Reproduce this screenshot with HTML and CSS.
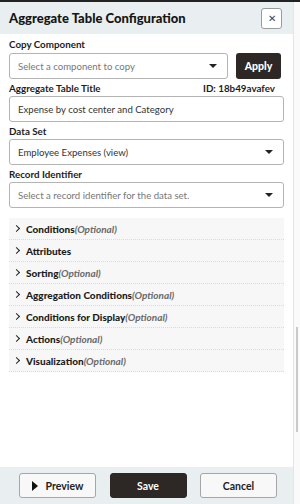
FILE: index.html
```html
<!DOCTYPE html>
<html>
    <head>
        <meta charset="UTF-8">
        <title>Aggregate Table Configuration</title>
        <link rel="stylesheet" href="styles.css">
    </head>
    <body>
        <div class="frame">
            <div class="panel">
                <!--header-->
                <div class="head">
                    <h1>Aggregate Table Configuration</h1>
                    <button class="close">&#x2715;</button>
                </div>
                <!--form-->
                <div class="body">
                    <div class="label">Copy Component</div>
                    <div class="copy-row">
                        <div class="select grow"><span class="ph">Select a component to copy</span><span class="caret"></span></div>
                        <button class="apply">Apply</button>
                    </div>
                    <div class="label split"><span>Aggregate Table Title</span><span>ID: 18b49avafev</span></div>
                    <div class="select">Expense by cost center and Category</div>
                    <div class="label">Data Set</div>
                    <div class="select"><span>Employee Expenses (view)</span><span class="caret"></span></div>
                    <div class="label">Record Identifier</div>
                    <div class="select"><span class="ph">Select a record identifier for the data set.</span><span class="caret"></span></div>

                    <div class="acc">
                        <div class="row"><span class="chev"></span><b>Conditions</b><i>(Optional)</i></div>
                        <div class="row"><span class="chev"></span><b>Attributes</b></div>
                        <div class="row"><span class="chev"></span><b>Sorting</b><i>(Optional)</i></div>
                        <div class="row"><span class="chev"></span><b>Aggregation Conditions</b><i>(Optional)</i></div>
                        <div class="row"><span class="chev"></span><b>Conditions for Display</b><i>(Optional)</i></div>
                        <div class="row"><span class="chev"></span><b>Actions</b><i>(Optional)</i></div>
                        <div class="row"><span class="chev"></span><b>Visualization</b><i>(Optional)</i></div>
                    </div>
                </div>
                <!--footer-->
                <div class="foot">
                    <button class="btn"><span class="play"></span>Preview</button>
                    <button class="btn dark">Save</button>
                    <button class="btn">Cancel</button>
                </div>
            </div>
            <div class="scroll"><div class="thumb"></div></div>
        </div>
    </body>
</html>
```

FILE: styles.css
```css
body{
    margin: 0;
    font-family: 'Lato', sans-serif;
    color: #1d1d1d;
    background-color: white;
}
.frame{
    display: flex;
    height: 504px;
    border-top: 2px solid #222;
    box-sizing: border-box;
}
.panel{
    width: 293px;
    display: flex;
    flex-direction: column;
    border-right: 1px solid #e2e6e6;
}
.head{
    background-color: #e9eff0;
    height: 32px;
    display: flex;
    align-items: center;
    justify-content: space-between;
    padding: 0 8px 0 9px;
}
.head h1{
    margin: 0;
    font-size: 13px;
    font-weight: 900;
    color: #151515;
}
.close{
    width: 21px;
    height: 21px;
    border: 1px solid #9a9a9a;
    border-radius: 3px;
    background-color: white;
    font-size: 10px;
    color: #444;
    padding: 0;
    margin-right: 3px;
}
.body{
    flex: 1;
    padding: 0 9px;
}
.label{
    font-size: 9.8px;
    line-height: 13px;
    font-weight: 700;
    margin: 3px 0 1px;
}
.label:first-child{
    margin: 4px 0 2px;
}
.split{
    display: flex;
    justify-content: space-between;
    padding-right: 9px;
}
.select{
    height: 26px;
    box-sizing: border-box;
    border: 1px solid #b4b4b4;
    border-radius: 3px;
    display: flex;
    align-items: center;
    justify-content: space-between;
    padding: 0 10px 0 8px;
    font-size: 9.6px;
    color: #333;
}
.ph{
    color: #777;
}
.caret{
    width: 0;
    height: 0;
    border-left: 4px solid transparent;
    border-right: 4px solid transparent;
    border-top: 4px solid #222;
}
.copy-row{
    display: flex;
    gap: 8px;
}
.grow{
    flex: 1;
}
.apply{
    width: 45px;
    height: 26px;
    border: none;
    border-radius: 3px;
    background-color: #2d2725;
    color: white;
    font-family: 'Lato', sans-serif;
    font-weight: 900;
    font-size: 10.5px;
    margin-right: 3px;
}
.acc{
    margin-top: 10px;
}
.row{
    height: 21px;
    border-bottom: 1px dotted #d6dcdc;
    background-color: #f7f7f7;
    display: flex;
    align-items: center;
    padding-left: 5px;
    font-size: 10px;
}
.row b{
    font-weight: 900;
}
.row i{
    color: #6a6a6a;
    font-weight: 700;
}
.chev{
    width: 4px;
    height: 4px;
    border-right: 1.5px solid #222;
    border-bottom: 1.5px solid #222;
    transform: rotate(-45deg);
    margin-right: 7px;
}
.foot{
    height: 37px;
    background-color: #e9eff0;
    display: flex;
    align-items: center;
    justify-content: space-between;
    padding: 0 16px 0 19px;
}
.btn{
    width: 77px;
    height: 25px;
    border: 1px solid #a6a6a6;
    border-radius: 3px;
    background-color: #f8f8f8;
    font-family: 'Lato', sans-serif;
    font-size: 10.5px;
    font-weight: 700;
    color: #222;
    display: flex;
    align-items: center;
    justify-content: center;
}
.btn.dark{
    background-color: #2d2725;
    border-color: #2d2725;
    color: white;
}
.play{
    width: 0;
    height: 0;
    border-top: 5px solid transparent;
    border-bottom: 5px solid transparent;
    border-left: 6px solid #111;
    margin-right: 8px;
}
.scroll{
    flex: 1;
    background-color: #fafafa;
    position: relative;
}
.thumb{
    position: absolute;
    left: 2px;
    width: 2px;
    top: 325px;
    height: 105px;
    background-color: #c9c9c9;
}
```
